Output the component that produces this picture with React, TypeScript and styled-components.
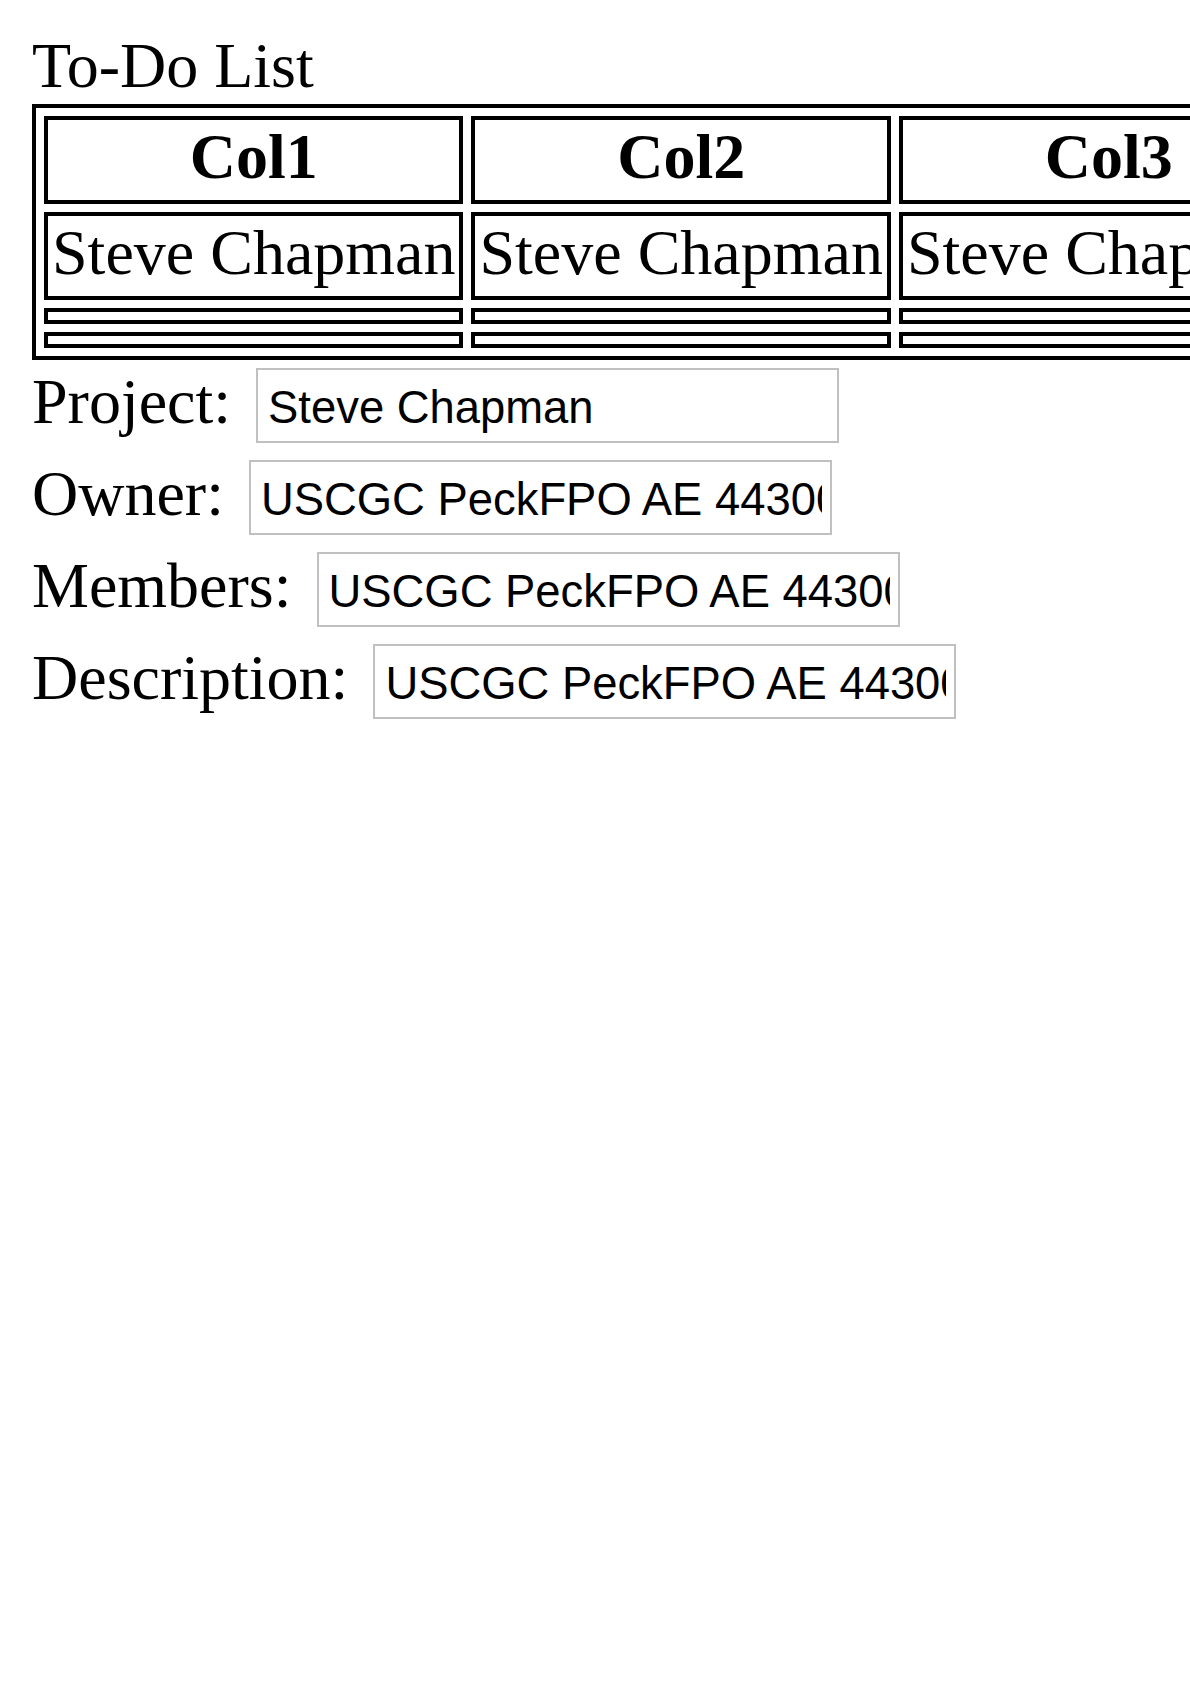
import React from "react";
import styled, { createGlobalStyle } from "styled-components";

const GlobalStyle = createGlobalStyle`
  html, body {
    margin: 0;
    padding: 0;
    background: #ffffff;
  }
  body {
    font-family: "Liberation Serif", "Times New Roman", serif;
    font-size: 64px;
    color: #000000;
  }
`;

const Page = styled.div`
  overflow: hidden;
  padding: 30px 0 0 32px;
`;

const Title = styled.div`
  line-height: 71px;
  margin: 0 0 3px;
`;

const Grid = styled.table`
  border: 4px solid #000000;
  border-collapse: separate;
  border-spacing: 8px;
`;

const HeadCell = styled.th`
  border: 4px solid #000000;
  padding: 1px 4px 7px;
  line-height: 72px;
  font-weight: bold;
  text-align: center;
  white-space: nowrap;
`;

const Cell = styled.td`
  border: 4px solid #000000;
  padding: 1px 4px 7px;
  line-height: 72px;
  white-space: nowrap;
`;

const Form = styled.div`
  display: flex;
  flex-direction: column;
`;

const Row = styled.div`
  display: flex;
  align-items: baseline;
`;

const Label = styled.label`
  line-height: 71px;
  white-space: nowrap;
`;

const Field = styled.input`
  box-sizing: border-box;
  width: 583px;
  height: 75px;
  margin: 8px 0 9px 25px;
  padding: 4px 8px 0 10px;
  border: 2px solid #c0c0c0;
  border-radius: 0;
  background: #ffffff;
  color: #000000;
  font-family: "Liberation Sans", Arial, Helvetica, sans-serif;
  font-size: 45.4px;
  outline: none;
`;

const columns = ["Col1", "Col2", "Col3"];
const address = "USCGC PeckFPO AE 44300";

const fields = [
  { label: "Project:", value: "Steve Chapman" },
  { label: "Owner:", value: address },
  { label: "Members:", value: address },
  { label: "Description:", value: address },
];

export default function App() {
  return (
    <>
      <GlobalStyle />
      <Page>
        <Title>To-Do List</Title>
        <Grid>
          <thead>
            <tr>
              {columns.map((c) => (
                <HeadCell key={c}>{c}</HeadCell>
              ))}
            </tr>
          </thead>
          <tbody>
            <tr>
              {columns.map((c) => (
                <Cell key={c}>Steve Chapman</Cell>
              ))}
            </tr>
            <tr>
              {columns.map((c) => (
                <Cell key={c} />
              ))}
            </tr>
            <tr>
              {columns.map((c) => (
                <Cell key={c} />
              ))}
            </tr>
          </tbody>
        </Grid>
        <Form>
          {fields.map((f) => (
            <Row key={f.label}>
              <Label>{f.label}</Label>
              <Field type="text" defaultValue={f.value} readOnly />
            </Row>
          ))}
        </Form>
      </Page>
    </>
  );
}
